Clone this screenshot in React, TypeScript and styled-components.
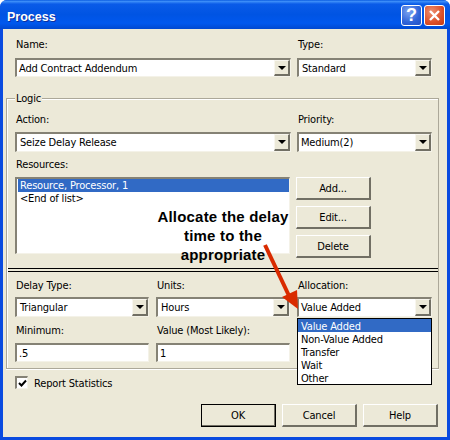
import React from "react";
import styled, { createGlobalStyle } from "styled-components";

const Global = createGlobalStyle`
  html, body { margin: 0; padding: 0; background: #fff; }
  * { box-sizing: border-box; }
`;

const Window = styled.div`
  position: relative;
  width: 450px;
  height: 440px;
  padding: 0 3px 3px;
  background: #0a4be0;
  border-radius: 7px 7px 0 0;
  overflow: hidden;
  display: flex;
  flex-direction: column;
  font-family: "DejaVu Sans", "Liberation Sans", Arial, sans-serif;
  font-stretch: condensed;
  font-size: 11px;
  letter-spacing: -0.17px;
  color: #000;
`;

const TitleBar = styled.div`
  flex: none;
  height: 29px;
  margin: 0 -3px;
  padding: 2px 5px 0 7px;
  display: flex;
  align-items: center;
  justify-content: space-between;
  background: linear-gradient(180deg, #0a5ce0 0%, #3c8df8 5%, #0a5be8 14%, #0054e3 50%, #0058ee 80%, #0048d0 100%);
`;

const Title = styled.span`
  font-family: "Liberation Sans", Arial, sans-serif;
  font-stretch: normal;
  font-size: 12.5px;
  font-weight: 700;
  letter-spacing: 0;
  color: #fff;
  padding-top: 2px;
  text-shadow: 1px 1px 0 #0f2f9c;
`;

const TitleButtons = styled.div`
  display: flex;
  gap: 2px;
`;

const CaptionButton = styled.div<{ $close?: boolean }>`
  width: 21px;
  height: 21px;
  border: 1px solid #fff;
  border-radius: 3px;
  display: flex;
  align-items: center;
  justify-content: center;
  background: ${(p) =>
    p.$close
      ? "radial-gradient(circle at 35% 30%, #ee8f70, #dc4f28 60%, #c23a14)"
      : "radial-gradient(circle at 35% 30%, #7ba4f0, #2f63d8 60%, #2450c4)"};
  color: #fff;
  font-family: "Liberation Sans", Arial, sans-serif;
  font-stretch: normal;
  font-size: 18px;
  font-weight: 700;
  letter-spacing: 0;
`;

const Client = styled.div`
  flex: 1;
  background: #ece9d8;
  padding: 9px 9px 0 0;
  display: flex;
  flex-direction: column;
`;

const Row = styled.div<{ $inset?: number; $top?: number; $gap?: number }>`
  display: flex;
  gap: ${(p) => p.$gap ?? 6}px;
  padding-left: ${(p) => p.$inset ?? 0}px;
  margin-top: ${(p) => p.$top ?? 0}px;
`;

const Field = styled.div<{ $w: number; $gap?: number }>`
  flex: none;
  width: ${(p) => p.$w}px;
  display: flex;
  flex-direction: column;
  gap: ${(p) => p.$gap ?? 5}px;
`;

const Label = styled.label`
  display: block;
  height: 13px;
  line-height: 13px;
  padding-left: 1px;
  white-space: nowrap;
`;

const Sunken = styled.div<{ $x?: number; $h?: number }>`
  height: ${(p) => p.$h ?? 20}px;
  background: #fff;
  display: flex;
  align-items: center;
  justify-content: space-between;
  padding: 0 0 0 ${(p) => p.$x ?? 3}px;
  border-top: 2px solid #858275;
  border-left: 2px solid #858275;
  border-right: 1px solid #f4f2e8;
  border-bottom: 1px solid #f4f2e8;
  white-space: nowrap;
`;

const FieldText = styled.span`
  padding-top: 1px;
`;

const DropButton = styled.div`
  flex: none;
  align-self: stretch;
  width: 16px;
  background: #ece9d8;
  border-top: 1px solid #f8f6ee;
  border-left: 1px solid #f8f6ee;
  border-right: 2px solid #716f64;
  border-bottom: 2px solid #716f64;
  display: flex;
  align-items: center;
  justify-content: center;
`;

const Caret = styled.span`
  width: 0;
  height: 0;
  border-left: 4.5px solid transparent;
  border-right: 4.5px solid transparent;
  border-top: 4px solid #000;
`;

const Combo = ({ text, x, h }: { text: string; x?: number; h?: number }) => (
  <Sunken $x={x} $h={h}>
    <span>{text}</span>
    <DropButton>
      <Caret />
    </DropButton>
  </Sunken>
);

const Group = styled.div`
  position: relative;
  margin: 21px 0 0 3px;
  width: 433px;
  height: 271px;
  border: 1px solid #aca899;
  box-shadow: inset 1px 1px 0 #fff, 0 1px 0 #fff;
  padding-top: 14px;
`;

const Legend = styled.span`
  position: absolute;
  left: 8px;
  top: -7px;
  height: 13px;
  line-height: 13px;
  padding: 0 1px;
  background: #ece9d8;
`;

const ListBox = styled.div`
  flex: none;
  width: 275px;
  height: 77px;
  background: #fff;
  border-top: 2px solid #858275;
  border-left: 2px solid #858275;
  border-right: 1px solid #f4f2e8;
  border-bottom: 1px solid #f4f2e8;
  padding-left: 1px;
`;

const ListItem = styled.div<{ $on?: boolean }>`
  height: 13px;
  line-height: 14px;
  padding-left: 2px;
  background: ${(p) => (p.$on ? "#316ac5" : "transparent")};
  color: ${(p) => (p.$on ? "#fff" : "#000")};
  white-space: nowrap;
`;

const ButtonColumn = styled.div`
  display: flex;
  flex-direction: column;
  gap: 6px;
`;

const Button = styled.div<{ $default?: boolean }>`
  width: 75px;
  height: 23px;
  padding-top: 1px;
  display: flex;
  align-items: center;
  justify-content: center;
  background: #ece9d8;
  border-top: 1px solid #fff;
  border-left: 1px solid #fff;
  border-right: 2px solid #716f64;
  border-bottom: 2px solid #716f64;
  ${(p) => (p.$default ? "outline: 1px solid #000;outline-offset:-1px;" : "")}
`;

const Divider = styled.div`
  height: 4px;
  margin-top: 10px;
  margin-left: 1px;
  border-top: 1px solid #000;
  border-bottom: 1px solid #000;
`;

const CheckRow = styled.div`
  display: flex;
  align-items: center;
  gap: 6px;
  margin: 7px 0 0 12px;
  height: 13px;
`;

const CheckBox = styled.div`
  flex: none;
  width: 13px;
  height: 13px;
  background: #fff;
  border-top: 2px solid #858275;
  border-left: 2px solid #858275;
  border-right: 1px solid #f4f2e8;
  border-bottom: 1px solid #f4f2e8;
  display: flex;
  align-items: center;
  justify-content: center;
`;

const Footer = styled.div`
  display: flex;
  justify-content: flex-end;
  gap: 6px;
  margin-top: 15px;
`;

const Menu = styled.div`
  position: absolute;
  left: 297px;
  top: 318px;
  width: 135px;
  height: 67px;
  background: #fff;
  border: 1px solid #000;
`;

const MenuItem = styled.div<{ $on?: boolean }>`
  height: 13px;
  line-height: 15px;
  padding-left: 3px;
  background: ${(p) => (p.$on ? "#316ac5" : "transparent")};
  color: ${(p) => (p.$on ? "#fff" : "#000")};
`;

const Callout = styled.div`
  position: absolute;
  left: 141px;
  top: 207px;
  width: 164px;
  text-align: center;
  font-family: "Liberation Sans", Arial, sans-serif;
  font-stretch: normal;
  font-size: 15px;
  font-weight: 700;
  letter-spacing: 0.2px;
  line-height: 19px;
`;

const ArrowSvg = styled.svg`
  position: absolute;
  left: 260px;
  top: 240px;
`;

export default function App() {
  return (
    <Window>
      <Global />
      <TitleBar>
        <Title>Process</Title>
        <TitleButtons>
          <CaptionButton>?</CaptionButton>
          <CaptionButton $close>
            <svg width="13" height="13" viewBox="0 0 13 13">
              <path d="M2 2 L11 11 M11 2 L2 11" stroke="#fff" strokeWidth="2.4" />
            </svg>
          </CaptionButton>
        </TitleButtons>
      </TitleBar>
      <Client>
        <Row $inset={12}>
          <Field $w={276} $gap={7}>
            <Label>Name:</Label>
            <Combo text="Add Contract Addendum" x={2} h={19} />
          </Field>
          <Field $w={135} $gap={7}>
            <Label>Type:</Label>
            <Combo text="Standard" x={3} h={19} />
          </Field>
        </Row>
        <Group>
          <Legend>Logic</Legend>
          <Row $inset={8}>
            <Field $w={276} $gap={6}>
              <Label>Action:</Label>
              <Combo text="Seize Delay Release" x={3} />
            </Field>
            <Field $w={135} $gap={6}>
              <Label>Priority:</Label>
              <Combo text="Medium(2)" x={2} />
            </Field>
          </Row>
          <Row $inset={8} $top={6}>
            <Label>Resources:</Label>
          </Row>
          <Row $inset={8} $top={6}>
            <ListBox>
              <ListItem $on>Resource, Processor, 1</ListItem>
              <ListItem>&lt;End of list&gt;</ListItem>
            </ListBox>
            <ButtonColumn>
              <Button>Add...</Button>
              <Button>Edit...</Button>
              <Button>Delete</Button>
            </ButtonColumn>
          </Row>
          <Divider />
          <Row $inset={8} $top={7} $gap={7}>
            <Field $w={134}>
              <Label>Delay Type:</Label>
              <Combo text="Triangular" x={3} />
            </Field>
            <Field $w={134}>
              <Label>Units:</Label>
              <Combo text="Hours" x={3} />
            </Field>
            <Field $w={135}>
              <Label>Allocation:</Label>
              <Combo text="Value Added" x={2} />
            </Field>
          </Row>
          <Row $inset={8} $top={7} $gap={7}>
            <Field $w={134} $gap={6}>
              <Label>Minimum:</Label>
              <Sunken $x={2} $h={19}>
                <FieldText>.5</FieldText>
              </Sunken>
            </Field>
            <Field $w={134} $gap={6}>
              <Label>Value (Most Likely):</Label>
              <Sunken $x={2} $h={19}>
                <FieldText>1</FieldText>
              </Sunken>
            </Field>
          </Row>
        </Group>
        <CheckRow>
          <CheckBox>
            <svg width="9" height="9" viewBox="0 0 9 9">
              <path d="M1 4 L3.5 6.5 L8 1.5" fill="none" stroke="#000" strokeWidth="2" />
            </svg>
          </CheckBox>
          <FieldText>Report Statistics</FieldText>
        </CheckRow>
        <Footer>
          <Button $default>OK</Button>
          <Button>Cancel</Button>
          <Button>Help</Button>
        </Footer>
      </Client>
      <Menu>
        <MenuItem $on>Value Added</MenuItem>
        <MenuItem>Non-Value Added</MenuItem>
        <MenuItem>Transfer</MenuItem>
        <MenuItem>Wait</MenuItem>
        <MenuItem>Other</MenuItem>
      </Menu>
      <Callout>
        Allocate the delay
        <br />
        time to the
        <br />
        appropriate
      </Callout>
      <ArrowSvg width="40" height="72" viewBox="0 0 40 72">
        <path d="M5 5 L31 60" stroke="#d92b00" strokeWidth="4" />
        <path d="M38 69 L37 50 L22 57 Z" fill="#d92b00" />
      </ArrowSvg>
    </Window>
  );
}
